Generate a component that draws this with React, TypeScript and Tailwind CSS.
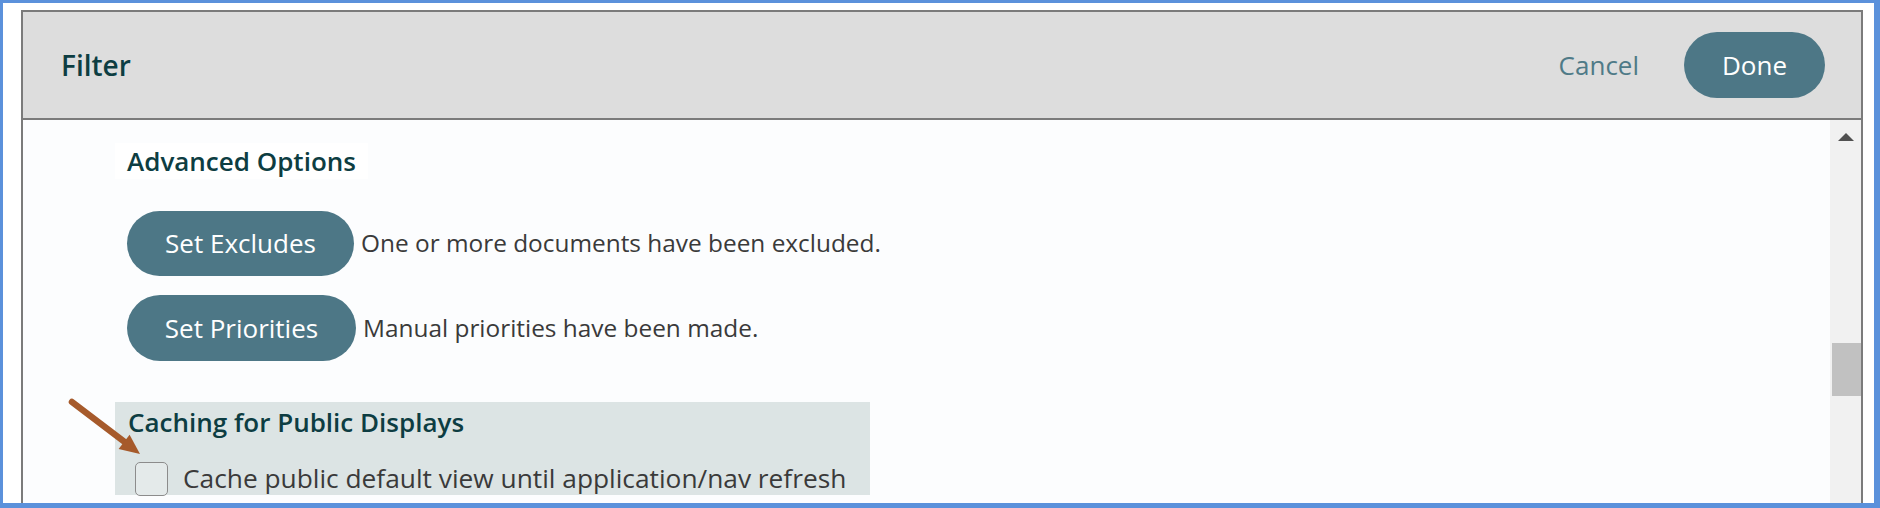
import React from "react";

export default function App() {
  return (
    <div className="relative w-[1880px] h-[508px] overflow-hidden bg-white border-[#5b91db] border-l-[3px] border-t-[3px] border-r-[6px] border-b-[5px] pl-[18px] pt-[7px] pr-[11px] font-['Open_Sans',_'Noto_Sans',_sans-serif]">
      <div className="flex flex-col h-[540px] border-2 border-b-0 border-[#7b7b7b]">
        {/* Header */}
        <div className="flex items-center h-[108px] shrink-0 bg-[#dddddd] border-b-2 border-[#7b7b7b] pl-[38px] pr-[36px]">
          <div className="flex-1 text-[28px] font-semibold text-[#0d3d42] leading-none">Filter</div>
          <button className="text-[26px] text-[#4f7a87] mr-[45px] leading-none">Cancel</button>
          <button className="h-[66px] w-[141px] rounded-full bg-[#4d7786] text-white text-[26px] leading-none">Done</button>
        </div>
        {/* Body */}
        <div className="flex flex-1 bg-[#fcfdfe]">
          <div className="flex-1 pl-[92px] pt-[23px]">
            <div className="inline-block bg-white px-[12px] text-[26px] leading-[36px] font-semibold text-[#0d3d42]">
              Advanced Options
            </div>
            <div className="mt-[32px] ml-[12px] flex items-center">
              <button className="h-[65px] w-[227px] rounded-full bg-[#4d7786] text-[26px] text-white">Set Excludes</button>
              <span className="ml-[7px] text-[24.4px] text-[#3a3a3a]">One or more documents have been excluded.</span>
            </div>
            <div className="mt-[19px] ml-[12px] flex items-center">
              <button className="h-[66px] w-[229px] rounded-full bg-[#4d7786] text-[26px] text-white">Set Priorities</button>
              <span className="ml-[7px] text-[24.4px] text-[#3a3a3a]">Manual priorities have been made.</span>
            </div>
            <div className="mt-[41px] w-[755px] h-[93px] bg-[#dce4e4] pl-[13px] pt-[2px]">
              <div className="text-[26px] leading-[36px] font-semibold text-[#0d3d42]">Caching for Public Displays</div>
              <div className="mt-[19px] ml-[7px] flex items-center">
                <div className="w-[33px] h-[34px] rounded-[5px] border border-[#8c8c8c] bg-[#e4eaea]" />
                <span className="ml-[15px] text-[26.3px] text-[#3a3a3a]">Cache public default view until application/nav refresh</span>
              </div>
            </div>
          </div>
          {/* Scrollbar */}
          <div className="w-[31px] bg-[#f1f1f1] flex flex-col">
            <svg className="mt-[13px] ml-[8px]" width="16" height="8" viewBox="0 0 16 8">
              <polygon points="0,8 8,0 16,8" fill="#505050" />
            </svg>
            <div className="mt-[202px] ml-[2px] w-[29px] h-[53px] bg-[#c1c1c1]" />
          </div>
        </div>
      </div>
      {/* Annotation arrow */}
      <svg className="absolute left-[54px] top-[387px] pointer-events-none" width="95" height="75" viewBox="57 387 95 75">
        <line x1="72" y1="399" x2="126" y2="440" stroke="#a65a2b" strokeWidth="6.5" strokeLinecap="round" />
        <polygon points="140,451 118.6,446 129.6,431.8" fill="#a65a2b" />
      </svg>
    </div>
  );
}
